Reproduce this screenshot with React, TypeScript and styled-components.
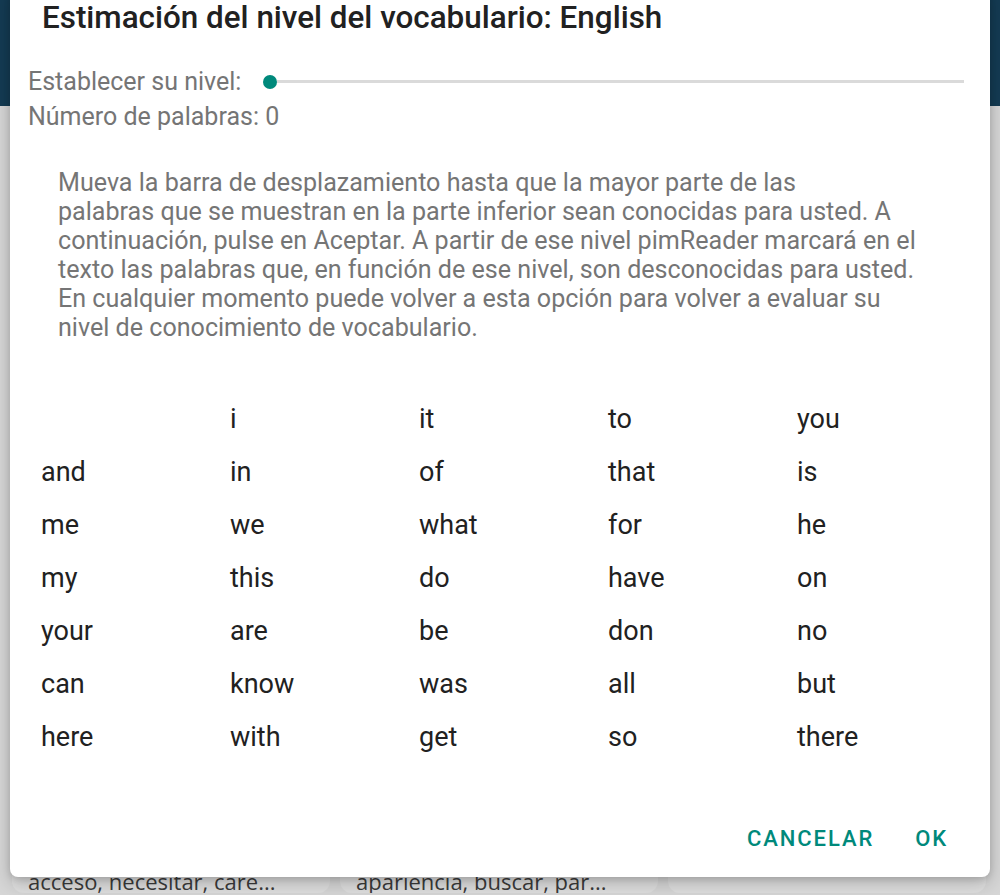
import React from 'react';
import styled, { createGlobalStyle } from 'styled-components';

const GlobalStyle = createGlobalStyle`
  html, body {
    margin: 0;
    padding: 0;
    background: #d6d6d6;
  }
  * {
    box-sizing: border-box;
  }
`;

const Screen = styled.div`
  position: relative;
  width: 1000px;
  height: 895px;
  overflow: hidden;
  display: flex;
  flex-direction: column;
  background: #d6d6d6;
  font-family: Roboto, 'Liberation Sans', sans-serif;
`;

const AppBar = styled.div`
  height: 106px;
  flex-shrink: 0;
  background: #143b53;
`;

const CardList = styled.div`
  margin-top: auto;
  display: grid;
  grid-template-columns: 318px 318px 318px;
  gap: 10px;
  padding: 0 10px 2px 12px;
`;

const BackCard = styled.div`
  height: 110px;
  border-radius: 12px;
  background: #dedede;
  display: flex;
  align-items: flex-end;
  overflow: hidden;
  padding: 0 14px 0 16px;
`;

const BackCardText = styled.span`
  font-family: 'Open Sans', 'DejaVu Sans', sans-serif;
  font-size: 22px;
  line-height: 24px;
  margin-bottom: 0;
  color: #3a3a3a;
  white-space: nowrap;
`;

const Dialog = styled.div`
  position: absolute;
  top: -14px;
  left: 10px;
  width: 980px;
  bottom: 18px;
  background: #ffffff;
  border-radius: 8px;
  box-shadow: 0 6px 18px rgba(0, 0, 0, 0.22), 0 2px 6px rgba(0, 0, 0, 0.12);
  display: flex;
  flex-direction: column;
`;

const Title = styled.h1`
  margin: 14px 0 0;
  padding: 0 32px;
  font-size: 31.4px;
  line-height: 36px;
  font-weight: 500;
  color: #212121;
  white-space: nowrap;
`;

const LevelBlock = styled.div`
  margin-top: 28px;
  padding: 0 26px 0 18px;
`;

const LevelRow = styled.div`
  display: flex;
  align-items: center;
  height: 35px;
`;

const Caption = styled.span`
  font-size: 25px;
  line-height: 35px;
  color: #757575;
  white-space: nowrap;
`;

const Slider = styled.div`
  flex: 1;
  display: flex;
  align-items: center;
  margin-left: 22px;
`;

const Thumb = styled.span`
  width: 14px;
  height: 14px;
  border-radius: 50%;
  background: #00897b;
  flex-shrink: 0;
`;

const Track = styled.span`
  flex: 1;
  height: 3px;
  background: #dadada;
`;

const Help = styled.p`
  margin: 34px 0 0;
  padding: 0 48px;
  font-size: 25.1px;
  line-height: 29px;
  color: #757575;
  white-space: nowrap;
`;

const WordList = styled.div`
  margin-top: 50px;
  height: 386px;
  overflow: hidden;
  padding-left: 31px;
  display: grid;
  grid-template-columns: repeat(5, 189px);
  grid-auto-rows: 53px;
  align-items: center;
`;

const Word = styled.span`
  font-size: 27px;
  line-height: 32px;
  color: #212121;
`;

const Actions = styled.div`
  margin-top: auto;
  display: flex;
  justify-content: flex-end;
  gap: 9px;
  padding: 0 26px 15px 0;
`;

const ActionButton = styled.button`
  height: 48px;
  padding: 0 16px;
  border: none;
  background: none;
  font-family: Roboto, 'Liberation Sans', sans-serif;
  font-size: 22px;
  font-weight: 500;
  letter-spacing: 1.9px;
  color: #00897b;
  cursor: pointer;
`;

const helpLines = [
  'Mueva la barra de desplazamiento hasta que la mayor parte de las',
  'palabras que se muestran en la parte inferior sean conocidas para usted. A',
  'continuación, pulse en Aceptar. A partir de ese nivel pimReader marcará en el',
  'texto las palabras que, en función de ese nivel, son desconocidas para usted.',
  'En cualquier momento puede volver a esta opción para volver a evaluar su',
  'nivel de conocimiento de vocabulario.',
];

const words = [
  '', 'i', 'it', 'to', 'you',
  'and', 'in', 'of', 'that', 'is',
  'me', 'we', 'what', 'for', 'he',
  'my', 'this', 'do', 'have', 'on',
  'your', 'are', 'be', 'don', 'no',
  'can', 'know', 'was', 'all', 'but',
  'here', 'with', 'get', 'so', 'there',
];

export default function App() {
  return (
    <>
      <GlobalStyle />
      <Screen>
        <AppBar />
        <CardList>
          <BackCard>
            <BackCardText>acceso, necesitar, caré...</BackCardText>
          </BackCard>
          <BackCard>
            <BackCardText>apariencia, buscar, par...</BackCardText>
          </BackCard>
          <BackCard />
        </CardList>

        <Dialog>
          <Title>Estimación del nivel del vocabulario: English</Title>

          <LevelBlock>
            <LevelRow>
              <Caption>Establecer su nivel:</Caption>
              <Slider>
                <Thumb />
                <Track />
              </Slider>
            </LevelRow>
            <LevelRow>
              <Caption>Número de palabras: 0</Caption>
            </LevelRow>
          </LevelBlock>

          <Help>
            {helpLines.map((line, i) => (
              <React.Fragment key={i}>
                {line}
                {i < helpLines.length - 1 && <br />}
              </React.Fragment>
            ))}
          </Help>

          <WordList>
            {words.map((w, i) => (
              <Word key={i}>{w}</Word>
            ))}
          </WordList>

          <Actions>
            <ActionButton>CANCELAR</ActionButton>
            <ActionButton>OK</ActionButton>
          </Actions>
        </Dialog>
      </Screen>
    </>
  );
}
